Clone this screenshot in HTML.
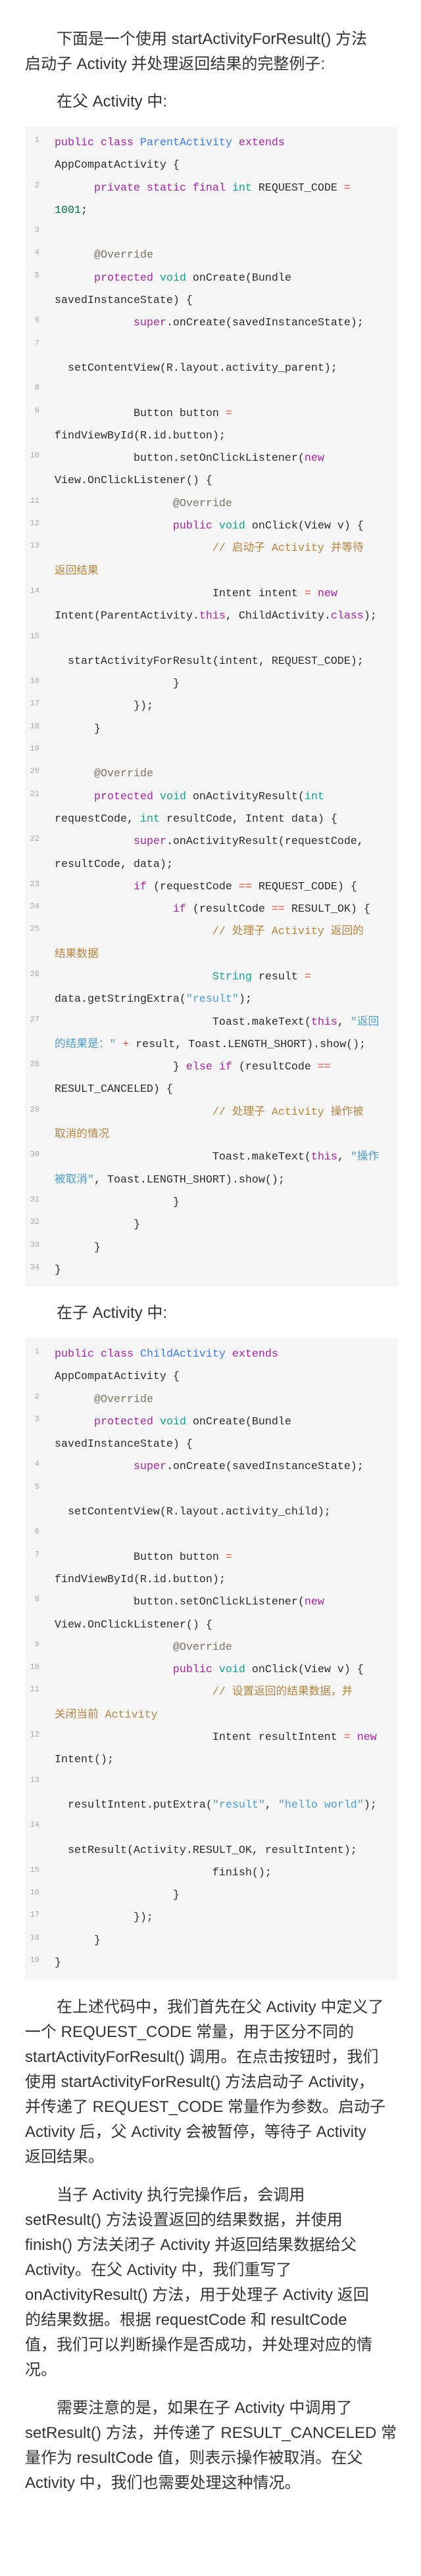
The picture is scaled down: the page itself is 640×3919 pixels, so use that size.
<!DOCTYPE html>
<html><head><meta charset="utf-8">
<style>
html,body{margin:0;padding:0;background:#fff;}
body{width:640px;height:3919px;overflow:hidden;position:relative;}
.p{position:absolute;left:38px;width:580px;font-family:"Liberation Sans","Noto Sans CJK SC",sans-serif;font-size:24px;line-height:38px;color:#333;white-space:nowrap;}
.ind{padding-left:48px;}
.blk{position:absolute;left:38px;width:567px;background:#f6f6f6;padding:8px 0;}
.r{position:relative;height:34.3px;line-height:34.3px;padding-left:45px;font-family:"Liberation Mono","Noto Sans CJK SC",monospace;font-size:16.67px;color:#2b2b2b;white-space:pre;}
.n{position:absolute;left:0;width:22px;top:5px;line-height:14px;text-align:right;font-size:12px;color:#aaa;font-family:"Liberation Mono",monospace;}
.k{color:#a626a4}.t{color:#4078f2}.y{color:#18a08b}.o{color:#e45649}.a{color:#7a7264}.c{color:#b8843f}.s{color:#4d9fd3}.m{color:#0b6b3a}
</style></head><body>
<div class="p" style="top:41px"><span class="ind"></span>下面是一个使用 startActivityForResult() 方法<br>启动子 Activity 并处理返回结果的完整例子:</div>
<div class="p" style="top:136px"><span class="ind"></span>在父 Activity 中:</div>

<div class="blk" style="top:193px">
<div class="r"><span class="n">1</span><span class="k">public</span> <span class="k">class</span> <span class="t">ParentActivity</span> <span class="k">extends</span></div>
<div class="r">AppCompatActivity {</div>
<div class="r"><span class="n">2</span>      <span class="k">private</span> <span class="k">static</span> <span class="k">final</span> <span class="y">int</span> REQUEST_CODE <span class="o">=</span></div>
<div class="r"><span class="m">1001</span>;</div>
<div class="r"><span class="n">3</span></div>
<div class="r"><span class="n">4</span>      <span class="a">@Override</span></div>
<div class="r"><span class="n">5</span>      <span class="k">protected</span> <span class="y">void</span> onCreate(Bundle</div>
<div class="r">savedInstanceState) {</div>
<div class="r"><span class="n">6</span>            <span class="k">super</span>.onCreate(savedInstanceState);</div>
<div class="r"><span class="n">7</span></div>
<div class="r">  setContentView(R.layout.activity_parent);</div>
<div class="r"><span class="n">8</span></div>
<div class="r"><span class="n">9</span>            Button button <span class="o">=</span></div>
<div class="r">findViewById(R.id.button);</div>
<div class="r"><span class="n">10</span>            button.setOnClickListener(<span class="k">new</span></div>
<div class="r">View.OnClickListener() {</div>
<div class="r"><span class="n">11</span>                  <span class="a">@Override</span></div>
<div class="r"><span class="n">12</span>                  <span class="k">public</span> <span class="y">void</span> onClick(View v) {</div>
<div class="r"><span class="n">13</span>                        <span class="c">// 启动子 Activity 并等待</span></div>
<div class="r"><span class="c">返回结果</span></div>
<div class="r"><span class="n">14</span>                        Intent intent <span class="o">=</span> <span class="k">new</span></div>
<div class="r">Intent(ParentActivity.<span class="k">this</span>, ChildActivity.<span class="k">class</span>);</div>
<div class="r"><span class="n">15</span></div>
<div class="r">  startActivityForResult(intent, REQUEST_CODE);</div>
<div class="r"><span class="n">16</span>                  }</div>
<div class="r"><span class="n">17</span>            });</div>
<div class="r"><span class="n">18</span>      }</div>
<div class="r"><span class="n">19</span></div>
<div class="r"><span class="n">20</span>      <span class="a">@Override</span></div>
<div class="r"><span class="n">21</span>      <span class="k">protected</span> <span class="y">void</span> onActivityResult(<span class="y">int</span></div>
<div class="r">requestCode, <span class="y">int</span> resultCode, Intent data) {</div>
<div class="r"><span class="n">22</span>            <span class="k">super</span>.onActivityResult(requestCode,</div>
<div class="r">resultCode, data);</div>
<div class="r"><span class="n">23</span>            <span class="k">if</span> (requestCode <span class="o">==</span> REQUEST_CODE) {</div>
<div class="r"><span class="n">24</span>                  <span class="k">if</span> (resultCode <span class="o">==</span> RESULT_OK) {</div>
<div class="r"><span class="n">25</span>                        <span class="c">// 处理子 Activity 返回的</span></div>
<div class="r"><span class="c">结果数据</span></div>
<div class="r"><span class="n">26</span>                        <span class="y">String</span> result <span class="o">=</span></div>
<div class="r">data.getStringExtra(<span class="s">"result"</span>);</div>
<div class="r"><span class="n">27</span>                        Toast.makeText(<span class="k">this</span>, <span class="s">"返回</span></div>
<div class="r"><span class="s">的结果是："</span> <span class="o">+</span> result, Toast.LENGTH_SHORT).show();</div>
<div class="r"><span class="n">28</span>                  } <span class="k">else</span> <span class="k">if</span> (resultCode <span class="o">==</span></div>
<div class="r">RESULT_CANCELED) {</div>
<div class="r"><span class="n">29</span>                        <span class="c">// 处理子 Activity 操作被</span></div>
<div class="r"><span class="c">取消的情况</span></div>
<div class="r"><span class="n">30</span>                        Toast.makeText(<span class="k">this</span>, <span class="s">"操作</span></div>
<div class="r"><span class="s">被取消"</span>, Toast.LENGTH_SHORT).show();</div>
<div class="r"><span class="n">31</span>                  }</div>
<div class="r"><span class="n">32</span>            }</div>
<div class="r"><span class="n">33</span>      }</div>
<div class="r"><span class="n">34</span>}</div>
</div>

<div class="p" style="top:1979px"><span class="ind"></span>在子 Activity 中:</div>

<div class="blk" style="top:2036px">
<div class="r"><span class="n">1</span><span class="k">public</span> <span class="k">class</span> <span class="t">ChildActivity</span> <span class="k">extends</span></div>
<div class="r">AppCompatActivity {</div>
<div class="r"><span class="n">2</span>      <span class="a">@Override</span></div>
<div class="r"><span class="n">3</span>      <span class="k">protected</span> <span class="y">void</span> onCreate(Bundle</div>
<div class="r">savedInstanceState) {</div>
<div class="r"><span class="n">4</span>            <span class="k">super</span>.onCreate(savedInstanceState);</div>
<div class="r"><span class="n">5</span></div>
<div class="r">  setContentView(R.layout.activity_child);</div>
<div class="r"><span class="n">6</span></div>
<div class="r"><span class="n">7</span>            Button button <span class="o">=</span></div>
<div class="r">findViewById(R.id.button);</div>
<div class="r"><span class="n">8</span>            button.setOnClickListener(<span class="k">new</span></div>
<div class="r">View.OnClickListener() {</div>
<div class="r"><span class="n">9</span>                  <span class="a">@Override</span></div>
<div class="r"><span class="n">10</span>                  <span class="k">public</span> <span class="y">void</span> onClick(View v) {</div>
<div class="r"><span class="n">11</span>                        <span class="c">// 设置返回的结果数据，并</span></div>
<div class="r"><span class="c">关闭当前 Activity</span></div>
<div class="r"><span class="n">12</span>                        Intent resultIntent <span class="o">=</span> <span class="k">new</span></div>
<div class="r">Intent();</div>
<div class="r"><span class="n">13</span></div>
<div class="r">  resultIntent.putExtra(<span class="s">"result"</span>, <span class="s">"hello world"</span>);</div>
<div class="r"><span class="n">14</span></div>
<div class="r">  setResult(Activity.RESULT_OK, resultIntent);</div>
<div class="r"><span class="n">15</span>                        finish();</div>
<div class="r"><span class="n">16</span>                  }</div>
<div class="r"><span class="n">17</span>            });</div>
<div class="r"><span class="n">18</span>      }</div>
<div class="r"><span class="n">19</span>}</div>
</div>

<div class="p" style="top:3035px"><span class="ind"></span>在上述代码中，我们首先在父 Activity 中定义了<br>一个 REQUEST_CODE 常量，用于区分不同的<br>startActivityForResult() 调用。在点击按钮时，我们<br>使用 startActivityForResult() 方法启动子 Activity，<br>并传递了 REQUEST_CODE 常量作为参数。启动子<br>Activity 后，父 Activity 会被暂停，等待子 Activity<br>返回结果。</div>
<div class="p" style="top:3321px"><span class="ind"></span>当子 Activity 执行完操作后，会调用<br>setResult() 方法设置返回的结果数据，并使用<br>finish() 方法关闭子 Activity 并返回结果数据给父<br>Activity。在父 Activity 中，我们重写了<br>onActivityResult() 方法，用于处理子 Activity 返回<br>的结果数据。根据 requestCode 和 resultCode<br>值，我们可以判断操作是否成功，并处理对应的情<br>况。</div>
<div class="p" style="top:3645px"><span class="ind"></span>需要注意的是，如果在子 Activity 中调用了<br>setResult() 方法，并传递了 RESULT_CANCELED 常<br>量作为 resultCode 值，则表示操作被取消。在父<br>Activity 中，我们也需要处理这种情况。</div>
</body></html>
